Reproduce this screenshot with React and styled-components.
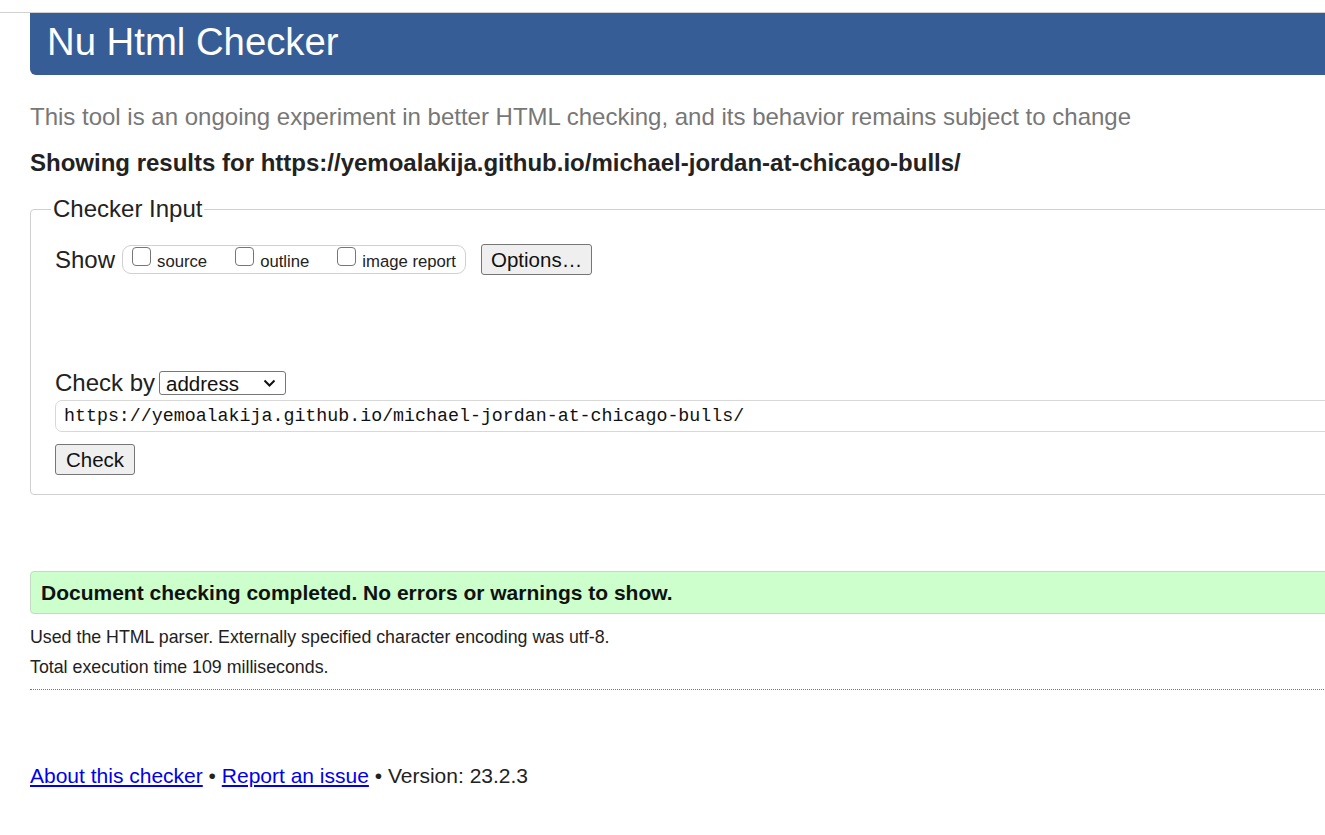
import React, { useState } from "react";
import styled, { createGlobalStyle } from "styled-components";

const PAGE_URL = "https://yemoalakija.github.io/michael-jordan-at-chicago-bulls/";

/* -------------------- STYLES -------------------- */

const GlobalStyle = createGlobalStyle`
  html, body {
    margin: 0;
    padding: 0;
    background: #fff;
    overflow: hidden;
  }
  body {
    font-family: "Liberation Sans", Arial, sans-serif;
    color: #222;
  }
`;

const TopRule = styled.div`
  margin-top: 12px;
  height: 1px;
  width: 100%;
  background: #d0d0d0;
`;

const Page = styled.div`
  width: 1500px;
  padding-left: 30px;
`;

const Header = styled.h1`
  margin: 0;
  height: 62px;
  line-height: 58px;
  padding-left: 17px;
  background: #365d95;
  color: #fff;
  font-weight: 400;
  font-size: 38.3px;
  border-bottom-left-radius: 6px;
`;

const Intro = styled.p`
  margin: 29px 0 0;
  font-size: 24px;
  line-height: 26px;
  color: #777;
`;

const Showing = styled.p`
  margin: 20px 0 0;
  font-size: 24px;
  line-height: 26px;
  font-weight: 700;
  color: #222;
`;

const Fieldset = styled.fieldset`
  margin: 19px 0 0;
  padding: 8px 24px 19px;
  border: 1px solid #cfcfcf;
  border-radius: 4px;
  min-width: 0;
`;

const Legend = styled.legend`
  margin-left: -4px;
  padding: 0 2px;
  font-size: 24px;
  color: #222;
`;

const Row = styled.div`
  display: flex;
  align-items: center;
  gap: ${(p) => p.$gap || 0}px;
  margin-top: ${(p) => p.$top || 0}px;
`;

const Label = styled.span`
  font-size: 24px;
  color: #222;
  margin-right: ${(p) => p.$right || 0}px;
`;

const ToggleGroup = styled.div`
  display: flex;
  align-items: flex-start;
  gap: 28px;
  height: 29px;
  box-sizing: border-box;
  padding: 1px 9px 0 9px;
  border: 1px solid #d0d0d0;
  border-radius: 9px;
`;

const Toggle = styled.label`
  display: flex;
  align-items: flex-start;
  gap: 6px;
  font-size: 16.7px;
  color: #222;
  line-height: 18px;
`;

const Box = styled.input`
  appearance: none;
  margin: 0;
  width: 19px;
  height: 19px;
  border: 1.5px solid #767676;
  border-radius: 4px;
  background: #fff;
  box-sizing: border-box;
`;

const ToggleText = styled.span`
  padding-top: 6px;
`;

const Button = styled.button`
  height: 31px;
  padding: 0 ${(p) => p.$pad || 10}px;
  margin-left: ${(p) => p.$left || 0}px;
  font-family: "Liberation Sans", Arial, sans-serif;
  font-size: 20.5px;
  color: #111;
  background: #efefef;
  border: 1px solid #767676;
  border-radius: 3px;
`;

const SelectWrap = styled.div`
  position: relative;
  width: 127px;
  height: 24px;
`;

const Select = styled.select`
  appearance: none;
  width: 100%;
  height: 100%;
  margin: 0;
  padding: 0 0 0 6px;
  font-family: "Liberation Sans", Arial, sans-serif;
  font-size: 20.5px;
  color: #111;
  background: #fff;
  border: 1px solid #767676;
  border-radius: 3px;
`;

const Chevron = styled.svg`
  position: absolute;
  right: 10px;
  top: 8px;
  pointer-events: none;
`;

const UrlInput = styled.input`
  display: block;
  width: 100%;
  height: 32px;
  box-sizing: border-box;
  margin-top: 3px;
  padding: 0 8px;
  font-family: "Liberation Mono", "DejaVu Sans Mono", monospace;
  font-size: 18.3px;
  color: #111;
  border: 1px solid #d8d8d8;
  border-radius: 7px;
  outline: none;
`;

const Result = styled.div`
  margin-top: 76px;
  height: 43px;
  box-sizing: border-box;
  display: flex;
  align-items: center;
  padding-left: 10px;
  background: #ccffcc;
  border: 1px solid #c6d8c6;
  border-radius: 4px;
  font-weight: 700;
  font-size: 21px;
  color: #111;
`;

const Note = styled.p`
  margin: ${(p) => p.$top || 0}px 0 0;
  font-size: 17.8px;
  line-height: 20px;
  color: #222;
`;

const Dotted = styled.hr`
  margin: 12px 0 0;
  border: 0;
  border-top: 1px dotted #777;
`;

const Footer = styled.p`
  margin: 74px 0 0;
  font-size: 21px;
  line-height: 24px;
  color: #222;

  a {
    color: #0000ee;
    text-decoration: underline;
  }
`;

/* -------------------- COMPONENT -------------------- */

export default function App() {
  const [show, setShow] = useState({ source: false, outline: false, image: false });
  const [mode, setMode] = useState("address");
  const [url, setUrl] = useState(PAGE_URL);

  const flip = (key) => setShow({ ...show, [key]: !show[key] });

  return (
    <>
      <GlobalStyle />
      <TopRule />
      <Page>
        <Header>Nu Html Checker</Header>

        <Intro>
          This tool is an ongoing experiment in better HTML checking, and its behavior remains subject to change
        </Intro>

        <Showing>Showing results for {PAGE_URL}</Showing>

        <Fieldset>
          <Legend>Checker Input</Legend>

          <Row $top={13}>
            <Label $right={7}>Show</Label>
            <ToggleGroup>
              <Toggle>
                <Box type="checkbox" checked={show.source} onChange={() => flip("source")} />
                <ToggleText>source</ToggleText>
              </Toggle>
              <Toggle>
                <Box type="checkbox" checked={show.outline} onChange={() => flip("outline")} />
                <ToggleText>outline</ToggleText>
              </Toggle>
              <Toggle>
                <Box type="checkbox" checked={show.image} onChange={() => flip("image")} />
                <ToggleText>image report</ToggleText>
              </Toggle>
            </ToggleGroup>
            <Button $pad={9} $left={15}>Options…</Button>
          </Row>

          <Row $top={94} $gap={4}>
            <Label>Check by</Label>
            <SelectWrap>
              <Select value={mode} onChange={(e) => setMode(e.target.value)}>
                <option value="address">address</option>
                <option value="upload">file upload</option>
                <option value="input">text input</option>
              </Select>
              <Chevron width="13" height="9" viewBox="0 0 13 9">
                <path d="M1.5 1.5 L6.5 6.5 L11.5 1.5" fill="none" stroke="#111" strokeWidth="2" />
              </Chevron>
            </SelectWrap>
          </Row>

          <UrlInput value={url} onChange={(e) => setUrl(e.target.value)} />

          <Row $top={12}>
            <Button $pad={10}>Check</Button>
          </Row>
        </Fieldset>

        <Result>Document checking completed. No errors or warnings to show.</Result>

        <Note $top={13}>Used the HTML parser. Externally specified character encoding was utf-8.</Note>
        <Note $top={10}>Total execution time 109 milliseconds.</Note>

        <Dotted />

        <Footer>
          <a href="#about">About this checker</a> • <a href="#issue">Report an issue</a> • Version: 23.2.3
        </Footer>
      </Page>
    </>
  );
}
